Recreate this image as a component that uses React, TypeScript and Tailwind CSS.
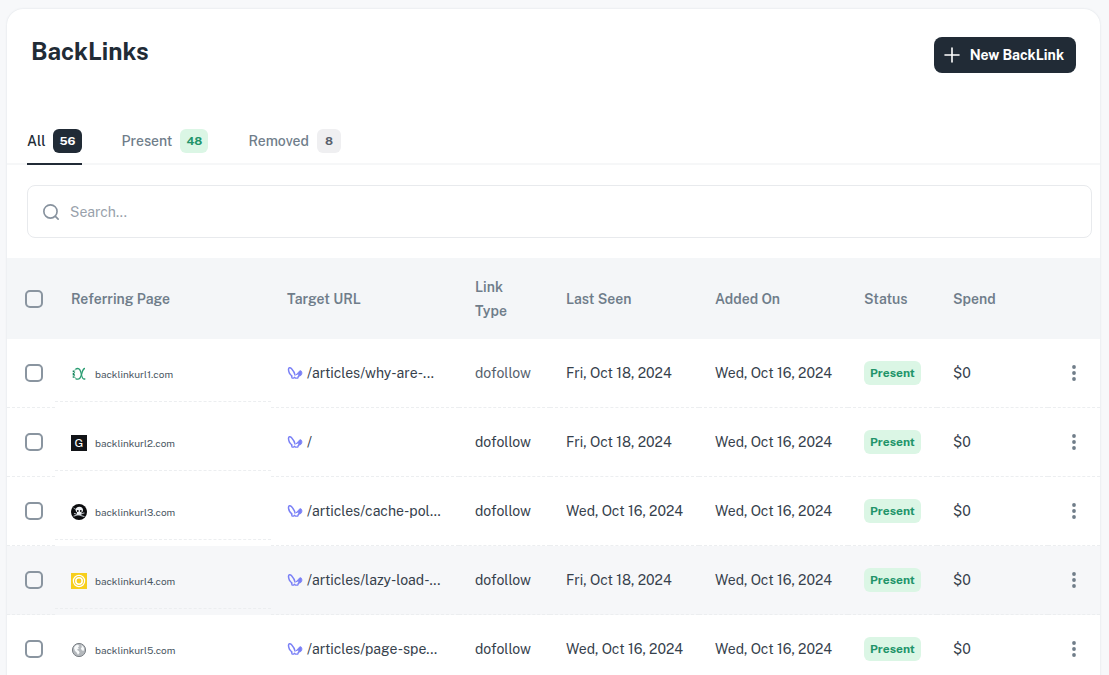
import { useState } from 'react'
import type { ReactNode } from 'react'

interface BackLink {
  id: number
  page: string
  icon: ReactNode
  target: string
  type: string
  lastSeen: string
  addedOn: string
  spend: string
  typeMuted?: boolean
  highlighted?: boolean
}

function AlphaIcon() {
  return (
    <svg viewBox="0 0 16 16" className="size-4 shrink-0" fill="none" stroke="#2a9d72" strokeWidth="1.300">
      <path d="M4.500 3.200C5.200 2.700 6 2.500 6.800 2.500c2.200 0 2.900 2.400 3.500 5.500.6 3 1.200 5 2.700 5h1.300" />
      <path d="M14 2.500c-1.800 0-2.500 2.200-3.200 5C10 10.800 9 13.200 6.800 13.200c-.8 0-1.600-.2-2.300-.8" />
      <path d="M4.300 3.300C3.700 4.500 3.500 6 3.500 8s.2 3.400.8 4.400" strokeWidth=".9" strokeDasharray="1.500 1" />
      <path d="M2.500 4.500v1.800M2.500 7v2.600M2.500 10.200v1.500" stroke="#14845c" strokeWidth="1.600" />
    </svg>
  )
}

function LetterIcon() {
  return (
    <span className="flex size-4 shrink-0 items-center justify-center bg-[#111317] text-xs leading-4 text-white">G</span>
  )
}

function SkullIcon() {
  return (
    <svg viewBox="0 0 16 16" className="size-4 shrink-0">
      <circle cx="8" cy="8" r="8" fill="#0b0c0e" />
      <path d="M3 12l10-3M3.500 9.500l9.500 3" stroke="#b4b9be" strokeWidth="1.200" strokeLinecap="round" />
      <path d="M2.500 4l2.500 1.500" stroke="#8d949b" strokeWidth="1" />
      <path d="M8.500 2.800C6 2.800 4.600 4.200 4.600 6c0 1.300.7 2 1.400 2.500v2.300h4.400V8.600c.9-.5 1.600-1.200 1.600-2.600 0-1.800-1.300-3.200-3.500-3.200z" fill="#eef1f4" />
      <circle cx="6.800" cy="7" r=".9" fill="#0b0c0e" />
      <circle cx="9.800" cy="7" r=".9" fill="#0b0c0e" />
    </svg>
  )
}

function RingIcon() {
  return (
    <svg viewBox="0 0 16 16" className="size-4 shrink-0">
      <rect width="16" height="16" fill="#f7cf1d" />
      <circle cx="8" cy="8" r="5.600" fill="none" stroke="#fff" strokeWidth="1.200" />
      <circle cx="8" cy="8" r="3.200" fill="none" stroke="#fff" strokeWidth="1.500" />
    </svg>
  )
}

function GlobeIcon() {
  return (
    <svg viewBox="0 0 16 16" className="size-4 shrink-0">
      <circle cx="8" cy="8" r="6.600" fill="#b4b8bc" stroke="#7b8086" strokeWidth="1" />
      <path d="M3 6c.5-1.600 2-3 3.800-3.200L8.500 4 7 5.200l.8 1.600-2 1 2 1.200.8 1.800-1.600 2-1.500-2.500L4 9z" fill="#f8fafb" />
      <path d="M10 3.200c1.600.6 2.800 1.800 3.200 3.500L12.500 9l-1.700-.7-1-2 1.200-1.200z" fill="#f8fafb" />
    </svg>
  )
}

function SiteIcon() {
  return (
    <svg viewBox="0 0 16 14" className="h-3.5 w-4 shrink-0" fill="none" stroke="#7a80f6" strokeLinejoin="round" strokeLinecap="round">
      <path d="M5 10C3 8.500 1.500 5.500 1.500 3.200c0-1.700 1.700-2 2.900-.7C6 4.300 7.600 6.500 8 9" strokeWidth="1.500" />
      <path d="M4.500 10.500l.7 1.700h1.500l.8-1 1 1h2.200l.6-1.500" strokeWidth="1.300" />
      <path d="M11 7.200c.3-1.500 1.400-2.400 3-2.400.9.900 1.100 2.300.6 3.600-.6 1.300-1.600 1.600-2.600 1.400z" fill="#7a80f6" strokeWidth=".9" />
      <path d="M9.500 8.500l1.500-1M11.200 10.500l1.200-.8" strokeWidth="1.200" />
    </svg>
  )
}

const links: BackLink[] = [
  { id: 1, page: 'backlinkurl1.com', icon: <AlphaIcon />, target: '/articles/why-are-...', type: 'dofollow', lastSeen: 'Fri, Oct 18, 2024', addedOn: 'Wed, Oct 16, 2024', spend: '$0', typeMuted: true },
  { id: 2, page: 'backlinkurl2.com', icon: <LetterIcon />, target: '/', type: 'dofollow', lastSeen: 'Fri, Oct 18, 2024', addedOn: 'Wed, Oct 16, 2024', spend: '$0' },
  { id: 3, page: 'backlinkurl3.com', icon: <SkullIcon />, target: '/articles/cache-pol...', type: 'dofollow', lastSeen: 'Wed, Oct 16, 2024', addedOn: 'Wed, Oct 16, 2024', spend: '$0' },
  { id: 4, page: 'backlinkurl4.com', icon: <RingIcon />, target: '/articles/lazy-load-...', type: 'dofollow', lastSeen: 'Fri, Oct 18, 2024', addedOn: 'Wed, Oct 16, 2024', spend: '$0', highlighted: true },
  { id: 5, page: 'backlinkurl5.com', icon: <GlobeIcon />, target: '/articles/page-spe...', type: 'dofollow', lastSeen: 'Wed, Oct 16, 2024', addedOn: 'Wed, Oct 16, 2024', spend: '$0' },
]

const tabs = [
  { label: 'All', count: 56, badge: 'bg-[#212b36] text-white' },
  { label: 'Present', count: 48, badge: 'bg-[#dbf6e5] text-[#22946a]' },
  { label: 'Removed', count: 8, badge: 'bg-[#efeff1] text-[#59626d]' },
]

const cell = 'border-b border-dashed border-[#eceef0] px-4'

function Checkbox({ label }: { label: string }) {
  return (
    <input
      type="checkbox"
      aria-label={label}
      className="block size-[18px] appearance-none rounded-[5px] border-2 border-[#8a95a0] checked:bg-[#212b36]"
    />
  )
}

export default function App() {
  const [activeTab, setActiveTab] = useState('All')
  const [query, setQuery] = useState('')

  const rows = links.filter((link) => link.page.includes(query) || link.target.includes(query))

  return (
    <div className="h-screen overflow-hidden bg-[#f7f8fa] pt-[9px] pr-[9px] pl-[7px] font-['Public_Sans','Inter',sans-serif] text-sm text-[#212b36]">
      <main className="min-h-full rounded-t-2xl bg-white shadow-[0_0_2px_rgba(145,158,171,0.3)]">
        <header className="flex items-start justify-between px-6 pt-7">
          <h1 className="text-2xl leading-7 font-bold">BackLinks</h1>
          <button type="button" className="flex h-9 items-center gap-2 rounded-lg bg-[#212b36] pr-3 pl-2 font-bold text-white">
            <svg viewBox="0 0 20 20" className="size-5" stroke="currentColor" strokeWidth="1.600" strokeLinecap="round">
              <path d="M10 3v14M3 10h14" />
            </svg>
            New BackLink
          </button>
        </header>

        <div role="tablist" className="mt-11 flex gap-10 border-b-2 border-[#f6f7f8] px-5">
          {tabs.map((tab) => (
            <button
              key={tab.label}
              type="button"
              role="tab"
              aria-selected={activeTab === tab.label}
              onClick={() => setActiveTab(tab.label)}
              className={`-mb-0.5 flex h-12 items-center gap-2 border-b-2 pt-0.5 font-medium ${
                activeTab === tab.label ? 'border-[#212b36]' : 'border-transparent text-[#6f7d8a]'
              }`}
            >
              {tab.label}
              <span className={`flex h-6 min-w-6 items-center justify-center rounded-md px-1.5 text-xs font-bold ${tab.badge}`}>
                {tab.count}
              </span>
            </button>
          ))}
        </div>

        {/* Search */}
        <div className="py-5 pr-2 pl-5">
          <label className="flex h-[53px] items-center gap-2 rounded-lg border border-[#e8eaed] px-3">
            <svg viewBox="0 0 20 20" className="size-[22px] text-[#87929e]" fill="none" stroke="currentColor" strokeWidth="1.500" strokeLinecap="round">
              <circle cx="9.500" cy="9.500" r="6" />
              <path d="M14 14l2.500 2.500" />
            </svg>
            <input
              type="text"
              aria-label="Search"
              placeholder="Search..."
              value={query}
              onChange={(e) => setQuery(e.target.value)}
              className="min-w-0 flex-1 outline-none placeholder:text-[#98a1ab]"
            />
          </label>
        </div>

        <table className="w-full table-fixed border-separate border-spacing-0 text-left">
          <colgroup>
            <col className="w-12" />
            <col className="w-[216px]" />
            <col className="w-[188px]" />
            <col className="w-[91px]" />
            <col className="w-[149px]" />
            <col className="w-[149px]" />
            <col className="w-[89px]" />
            <col />
            <col className="w-[52px]" />
          </colgroup>
          <thead>
            <tr className="h-[81px] bg-[#f4f6f8] leading-6 text-[#6f7d8a]">
              <th className="pl-[18px]"><Checkbox label="Select all" /></th>
              <th className="px-4 font-semibold">Referring Page</th>
              <th className="px-4 font-semibold">Target URL</th>
              <th className="px-4 font-semibold">Link Type</th>
              <th className="px-4 font-semibold">Last Seen</th>
              <th className="px-4 font-semibold">Added On</th>
              <th className="px-4 font-semibold">Status</th>
              <th className="px-4 font-semibold">Spend</th>
              <th aria-label="Actions" />
            </tr>
          </thead>
          <tbody className="text-[#36414c]">
            {rows.map((link) => (
              <tr key={link.id} className={`h-[69px] whitespace-nowrap hover:bg-[#f6f7f9] ${link.highlighted ? 'bg-[#f6f7f9]' : ''}`}>
                <td className="border-b border-dashed border-[#eceef0] pl-[18px]"><Checkbox label={`Select ${link.page}`} /></td>
                <td className="align-top">
                  <div className="flex h-[63px] items-center gap-2 border-b border-dashed border-[#eceef0] px-4 pt-2 text-[10px] text-[#4b5763]">
                    {link.icon}
                    {link.page}
                  </div>
                </td>
                <td className={cell}>
                  <div className="flex items-center gap-1">
                    <SiteIcon />
                    {link.target}
                  </div>
                </td>
                <td className={`${cell} ${link.typeMuted ? 'text-[#56616d]' : ''}`}>{link.type}</td>
                <td className={cell}>{link.lastSeen}</td>
                <td className={cell}>{link.addedOn}</td>
                <td className={cell}>
                  <span className="inline-flex h-6 items-center rounded-md bg-[#dbf6e5] px-1.5 text-xs font-bold text-[#22946a]">Present</span>
                </td>
                <td className={cell}>{link.spend}</td>
                <td className="border-b border-dashed border-[#eceef0] pl-4">
                  <button type="button" aria-label="More actions" className="block text-[#707d89]">
                    <svg viewBox="0 0 20 20" className="size-5" fill="currentColor">
                      <circle cx="10" cy="4" r="1.900" />
                      <circle cx="10" cy="10" r="1.900" />
                      <circle cx="10" cy="16" r="1.900" />
                    </svg>
                  </button>
                </td>
              </tr>
            ))}
          </tbody>
        </table>
      </main>
    </div>
  )
}
